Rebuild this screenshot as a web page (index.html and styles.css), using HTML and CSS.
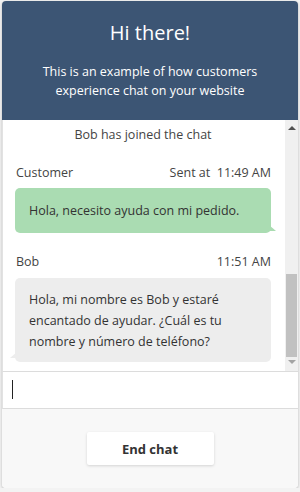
FILE: index.html
```html
<!DOCTYPE html>
<html lang="en">
<head>
    <meta charset="UTF-8">
    <meta name="viewport" content="width=device-width, initial-scale=1.0">
    <title>Chat preview</title>
    <link rel="stylesheet" href="styles.css">
</head>
<body>
    <div class="widget">
        <div class="chat-header">
            <h1>Hi there!</h1>
            <p>This is an example of how customers<br>experience chat on your website</p>
        </div>

        <div class="transcript">
            <div class="messages">
                <div class="system-msg">Bob has joined the chat</div>

                <div class="msg-meta">
                    <span>Customer</span>
                    <span>Sent at&nbsp; 11:49 AM</span>
                </div>
                <div class="bubble bubble-customer">Hola, necesito ayuda con mi pedido.</div>

                <div class="msg-meta meta-agent">
                    <span>Bob</span>
                    <span>11:51 AM</span>
                </div>
                <div class="bubble bubble-agent">Hola, mi nombre es Bob y estaré encantado de ayudar. ¿Cuál es tu nombre y número de teléfono?</div>
            </div>

            <div class="scrollbar">
                <span class="arrow arrow-up"></span>
                <div class="track"><div class="thumb"></div></div>
                <span class="arrow arrow-down"></span>
            </div>
        </div>

        <div class="composer">
            <span class="caret"></span>
        </div>

        <div class="chat-footer">
            <button class="end-btn">End chat</button>
        </div>
    </div>
</body>
</html>
```

FILE: styles.css
```css
* {
    margin: 0;
    padding: 0;
    box-sizing: border-box;
}

body {
    font-family: 'Open Sans', 'Liberation Sans', sans-serif;
    background: #f3f3f3;
    padding: 1px 2px 0;
    color: #333;
}

.widget {
    width: 296px;
    height: 487px;
    display: flex;
    flex-direction: column;
    background: #fff;
    border-radius: 4px;
    box-shadow: 0 1px 3px rgba(0, 0, 0, 0.25);
    overflow: hidden;
}

.chat-header {
    background: #3c5574;
    color: #fff;
    text-align: center;
    height: 119px;
    padding-top: 18px;
}

.chat-header h1 {
    font-size: 20px;
    font-weight: normal;
    line-height: 28px;
    margin-bottom: 15px;
}

.chat-header p {
    font-size: 12.5px;
    line-height: 19px;
}

.transcript {
    height: 251px;
    display: flex;
    border-left: 1px solid #e2e2e2;
}

.messages {
    flex: 1;
    padding: 6px 14px 0 12px;
    font-size: 12.5px;
}

.system-msg {
    text-align: center;
    line-height: 18px;
    color: #444;
}

.msg-meta {
    display: flex;
    justify-content: space-between;
    line-height: 18px;
    margin-top: 20px;
    padding-left: 1px;
    color: #444;
}

.meta-agent {
    margin-top: 20px;
}

.bubble {
    position: relative;
    border-radius: 5px;
    padding: 13px 14px;
    line-height: 19px;
    margin-top: 6px;
    color: #333;
}

.bubble-customer {
    background: #aadcb2;
}

.bubble-customer::after {
    content: '';
    position: absolute;
    right: -5px;
    bottom: 2px;
    border-left: 7px solid #aadcb2;
    border-top: 6px solid transparent;
}

.bubble-agent {
    background: #ededed;
    padding: 11px 14px 10px;
    line-height: 21px;
    margin-top: 7px;
}

.bubble-agent::after {
    content: '';
    position: absolute;
    left: -5px;
    bottom: 4px;
    border-right: 7px solid #ededed;
    border-top: 6px solid transparent;
}

.scrollbar {
    width: 13px;
    background: #f0f0f0;
    display: flex;
    flex-direction: column;
    align-items: center;
}

.arrow {
    width: 0;
    height: 0;
    border-left: 4px solid transparent;
    border-right: 4px solid transparent;
}

.arrow-up {
    margin-top: 6px;
    border-bottom: 4px solid #505050;
}

.arrow-down {
    margin: 3px 0 7px;
    border-top: 4px solid #a3a3a3;
}

.track {
    flex: 1;
    width: 100%;
    display: flex;
    flex-direction: column;
    justify-content: flex-end;
}

.thumb {
    height: 83px;
    margin: 0 1px;
    background: #c1c1c1;
}

.composer {
    height: 38px;
    border-top: 1px solid #dcdcdc;
    border-bottom: 1px solid #dcdcdc;
    border-left: 1px solid #e2e2e2;
    padding: 8px 0 0 9px;
}

.caret {
    display: block;
    width: 1px;
    height: 19px;
    background: #222;
}

.chat-footer {
    flex: 1;
    background: #f8f8f8;
    display: flex;
    justify-content: center;
    padding-top: 23px;
}

.end-btn {
    width: 127px;
    height: 33px;
    background: #fff;
    border: none;
    border-radius: 2px;
    box-shadow: 0 1px 3px rgba(0, 0, 0, 0.15);
    font-family: inherit;
    font-size: 13px;
    font-weight: bold;
    color: #333;
    cursor: pointer;
}
```
